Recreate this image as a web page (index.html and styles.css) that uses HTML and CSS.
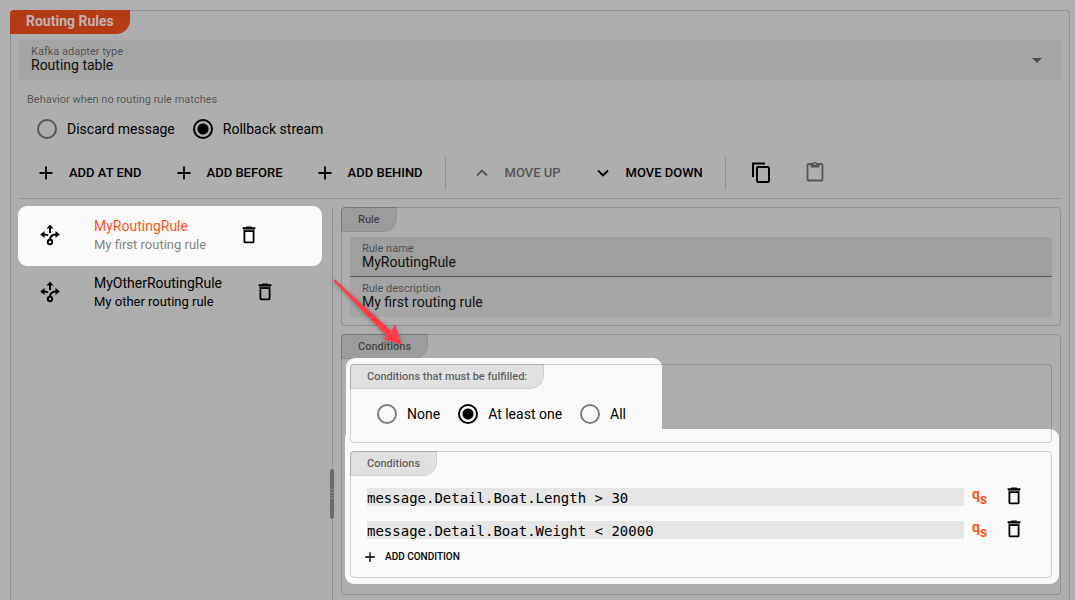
FILE: index.html
```html
<!DOCTYPE html>
<html lang="en">
<head>
<meta charset="utf-8">
<title>Routing Rules</title>
<meta name="viewport" content="width=device-width, initial-scale=1">
<link rel="stylesheet" href="styles.css">
</head>
<body>
<svg class="sprite" aria-hidden="true">
  <symbol id="plus" viewBox="0 0 16 16"><path d="M8 1.5v13M1.5 8h13" fill="none" stroke="currentColor" stroke-width="1.8"/></symbol>
  <symbol id="up" viewBox="0 0 16 16"><path d="M3 10.5 8 5.6l5 4.9" fill="none" stroke="currentColor" stroke-width="1.8"/></symbol>
  <symbol id="down" viewBox="0 0 16 16"><path d="M3 5.5l5 4.9 5-4.9" fill="none" stroke="currentColor" stroke-width="1.8"/></symbol>
  <symbol id="trash" viewBox="0 0 14 18"><path d="M.6 2.1h12.8M4.2 1.2h5.6" fill="none" stroke="currentColor" stroke-width="1.6"/><path d="M1 3.6h12" stroke="currentColor" stroke-width="1.6" opacity=".55"/><path d="M2.4 5.2h9.2v10.2q0 1-1 1H3.400q-1 0-1-1z" fill="none" stroke="currentColor" stroke-width="1.8"/></symbol>
  <symbol id="route" viewBox="0 0 20 22"><g fill="none" stroke="currentColor" stroke-width="2"><circle cx="10" cy="18" r="2.2"/><path d="M10 4v5M10 16c0-3.300 2-5.500 6-5.500M4 10.500c1.800 0 3 .3 4 1"/></g><path d="M10 .5 13.500 4.500h-7zM19.800 10.500l-4.300 3.500V7zM.2 10.500 4.500 7v7z" fill="currentColor"/></symbol>
</svg>
<main class="panel">
  <h1 class="tab tab-main">Routing Rules</h1>

  <div class="field field-select">
    <label for="adapter">Kafka adapter type</label>
    <select id="adapter"><option>Routing table</option></select>
    <svg class="caret" viewBox="0 0 10 5" aria-hidden="true"><path d="M0 0h10L5 5z" fill="currentColor"/></svg>
  </div>

  <p class="hint" id="behavior">Behavior when no routing rule matches</p>
  <div class="radios" role="radiogroup" aria-labelledby="behavior">
    <label><input type="radio" name="behavior">Discard message</label>
    <label><input type="radio" name="behavior" checked>Rollback stream</label>
  </div>

  <div class="toolbar">
    <div class="tools">
      <button type="button"><svg class="icon"><use href="#plus"/></svg>ADD AT END</button>
      <button type="button"><svg class="icon"><use href="#plus"/></svg>ADD BEFORE</button>
      <button type="button"><svg class="icon"><use href="#plus"/></svg>ADD BEHIND</button>
    </div>
    <div class="tools tools-move">
      <button type="button" disabled><svg class="icon"><use href="#up"/></svg>MOVE UP</button>
      <button type="button"><svg class="icon"><use href="#down"/></svg>MOVE DOWN</button>
    </div>
    <div class="tools tools-clip">
      <button type="button" aria-label="Copy"><svg class="clip" viewBox="0 0 20 22"><path d="M2 15V1.500h12" fill="none" stroke="currentColor" stroke-width="2"/><rect x="6" y="5" width="12" height="15" rx="1" fill="none" stroke="currentColor" stroke-width="2"/></svg></button>
      <button type="button" aria-label="Paste" disabled><svg class="clip" viewBox="0 0 20 22"><rect x="2.500" y="2" width="15" height="16.500" rx="1" fill="none" stroke="currentColor" stroke-width="1.800"/><path d="M5.500 1.500h2.300a2.300 2.300 0 0 1 4.400 0h2.300v4h-9z" fill="currentColor"/><circle cx="10" cy="2" r=".9" class="hole"/></svg></button>
    </div>
  </div>

  <div class="split">
    <ul class="rules">
      <li class="rule selected">
        <svg class="route"><use href="#route"/></svg>
        <div><span class="name">MyRoutingRule</span><span class="desc">My first routing rule</span></div>
        <button type="button" aria-label="Delete MyRoutingRule"><svg class="trash"><use href="#trash"/></svg></button>
      </li>
      <li class="rule">
        <svg class="route"><use href="#route"/></svg>
        <div><span class="name">MyOtherRoutingRule</span><span class="desc">My other routing rule</span></div>
        <button type="button" aria-label="Delete MyOtherRoutingRule"><svg class="trash"><use href="#trash"/></svg></button>
      </li>
    </ul>
    <div class="divider"><span class="grip"></span></div>
    <div class="detail">
      <section class="box">
        <h2 class="tab">Rule</h2>
        <div class="field field-active">
          <label for="rname">Rule name</label>
          <input id="rname" type="text" value="MyRoutingRule">
        </div>
        <div class="field">
          <label for="rdesc">Rule description</label>
          <input id="rdesc" type="text" value="My first routing rule">
        </div>
      </section>
      <section class="box">
        <h2 class="tab">Conditions</h2>
        <div class="spotlight">
          <section class="box">
            <h3 class="tab" id="must">Conditions that must be fulfilled:</h3>
            <div class="radios" role="radiogroup" aria-labelledby="must">
              <label><input type="radio" name="must">None</label>
              <label><input type="radio" name="must" checked>At least one</label>
              <label><input type="radio" name="must">All</label>
            </div>
          </section>
          <section class="box box-list">
            <h3 class="tab">Conditions</h3>
            <div class="condition">
              <input type="text" aria-label="Condition 1" value="message.Detail.Boat.Length &gt; 30">
              <button class="qs" type="button"><span>q</span><span class="low">s</span></button>
              <button type="button" aria-label="Delete condition 1"><svg class="trash"><use href="#trash"/></svg></button>
            </div>
            <div class="condition">
              <input type="text" aria-label="Condition 2" value="message.Detail.Boat.Weight &lt; 20000">
              <button class="qs" type="button"><span>q</span><span class="low">s</span></button>
              <button type="button" aria-label="Delete condition 2"><svg class="trash"><use href="#trash"/></svg></button>
            </div>
            <button class="add" type="button"><svg class="icon-small"><use href="#plus"/></svg>ADD CONDITION</button>
          </section>
        </div>
      </section>
      <svg class="arrow" viewBox="0 0 80 76" aria-hidden="true"><path d="M3.500 4 5 2.500 61.500 54 65 47 71.500 67.500 53.500 62 57 59z" fill="#ff3b47"/></svg>
    </div>
  </div>
</main>
</body>
</html>
```
FILE: styles.css
```css
* { box-sizing: border-box; }
:root {
  --line: rgba(0, 0, 0, .17);
  --lit: #fafafa;
  --muted: rgba(0, 0, 0, .54);
}
body {
  margin: 0;
  padding: 10px 5px 0 10px;
  background: #b0b0b0;
  color: #000;
  font: 14px/20px Roboto, sans-serif;
}
h1, h2, h3, p, ul { margin: 0; padding: 0; }
ul { list-style: none; }
button {
  display: inline-flex;
  align-items: center;
  padding: 0;
  border: 0;
  background: none;
  color: inherit;
  font: 500 13px/20px Roboto, sans-serif;
}
button:disabled { color: #555; }
input, select {
  margin: 0;
  padding: 0;
  border: 0;
  border-radius: 0;
  background: none;
  color: inherit;
  font: inherit;
  appearance: none;
}
svg { display: block; flex: none; }
.sprite { position: absolute; width: 0; height: 0; }

.panel {
  display: flex;
  flex-direction: column;
  min-height: calc(100vh - 10px);
  padding: 0 8px;
  border: 1px solid var(--line);
  border-bottom: 0;
  border-radius: 4px 4px 0 0;
  background: #aeaeae;
}
.tab {
  align-self: flex-start;
  width: fit-content;
  height: 25px;
  margin: -1px 0 5px -9px;
  padding: 0 16px;
  border: 1px solid var(--line);
  border-radius: 4px 0 14px 0;
  background: rgba(0, 0, 0, .1);
  background-clip: padding-box;
  color: rgba(0, 0, 0, .6);
  font-size: 11px;
  font-weight: 500;
  line-height: 23px;
}
.tab-main {
  height: 24px;
  margin-bottom: 6px;
  border: 0;
  background: #b43b16;
  color: #bdb3b0;
  font-size: 14px;
  font-weight: 700;
  line-height: 23px;
}

.field {
  position: relative;
  display: flex;
  flex-direction: column;
  height: 40px;
  padding: 6px 12px 0;
  border-radius: 4px 4px 0 0;
  background: rgba(0, 0, 0, .05);
}
.field label { color: var(--muted); font-size: 11px; line-height: 11px; }
.field input, .field select { width: 100%; height: 17px; color: #111; line-height: 17px; }
.field-active { border-bottom: 1px solid #5c5c5c; background: rgba(0, 0, 0, .09); }
.caret { position: absolute; top: 18px; right: 19px; width: 10px; height: 5px; color: #4c4c4c; }

.hint { margin: 12px 8px 0; color: var(--muted); font-size: 11px; line-height: 16px; }
.radios { display: flex; gap: 18px; margin: 11px 0 0 18px; }
.radios label { display: flex; align-items: center; gap: 10px; }
.radios input {
  width: 20px;
  height: 20px;
  border: 2px solid rgba(0, 0, 0, .5);
  border-radius: 50%;
}
.radios input:checked { border-color: #000; background: radial-gradient(#000 5px, transparent 6px); }

.toolbar {
  display: flex;
  margin-top: 18px;
  padding-bottom: 8px;
  border-bottom: 1px solid var(--line);
}
.tools { display: flex; gap: 34px; height: 33px; padding: 0 22px 2px 19px; }
.tools button { gap: 15px; }
.tools-move { padding-left: 28px; border: solid var(--line); border-width: 0 1px; }
.tools-clip { padding-left: 25px; }
.icon { width: 16px; height: 16px; }
.clip { width: 20px; height: 22px; }
.hole { fill: #aeaeae; }

.split { display: flex; flex: 1; padding-top: 8px; }
.rules { flex: 0 0 311px; }
.rule {
  position: relative;
  z-index: 0;
  display: flex;
  align-items: center;
  height: 57px;
  padding: 0 0 2px 21px;
}
.rule div { margin: 0 36px 0 34px; }
.rule span { display: block; }
.desc { font-size: 13px; line-height: 18px; }
.selected .name { color: #ff5424; }
.selected .desc { color: #858585; }
.selected::before {
  content: "";
  position: absolute;
  z-index: -1;
  inset: -1px 8px -2px -1px;
  border-radius: 9px;
  background: var(--lit);
}
.route { width: 20px; height: 22px; }
.trash { width: 14px; height: 18px; }

.divider { position: relative; width: 5px; background: linear-gradient(var(--line), var(--line)) 2px 0 / 1px 100% no-repeat; }
.grip {
  position: absolute;
  top: 262px;
  left: 0;
  width: 4px;
  height: 50px;
  border-radius: 2px;
  background: repeating-linear-gradient(#858585 0 1px, #6c6c6c 1px 3px) 0 20px / 100% 12px no-repeat #6c6c6c;
}
.detail {
  position: relative;
  display: flex;
  flex: 1;
  flex-direction: column;
  gap: 8px;
  min-width: 0;
  margin-left: 6px;
  padding-bottom: 5px;
}
.box { padding: 0 8px 8px; border: 1px solid var(--line); border-radius: 4px; }
.spotlight { position: relative; z-index: 0; display: flex; flex-direction: column; gap: 8px; padding-bottom: 8px; }
.spotlight::before, .spotlight::after {
  content: "";
  position: absolute;
  z-index: -1;
  background: var(--lit);
}
.spotlight::before { top: -6px; left: -4px; width: 316px; height: 80px; border-radius: 9px 9px 0 0; }
.spotlight::after { inset: 65px -7px 2px -5px; border-radius: 9px; }
.spotlight .radios { margin: 15px 0 10px 18px; }
.spotlight .box-list { padding: 0 30px 10px 16px; }
.box-list .tab { margin: -1px 0 12px -17px; }
.condition { display: flex; align-items: center; margin-bottom: 15px; }
.condition input {
  flex: 1;
  min-width: 0;
  height: 18px;
  padding-top: 2px;
  background: #e6e6e6;
  font: 14px/16px "DejaVu Sans Mono", monospace;
}
.condition button { height: 18px; padding-bottom: 2px; }
.condition .qs { align-items: flex-start; width: 15px; margin: 0 20px 0 8px; padding: 0; color: #ff5424; font-weight: 700; font-size: 14px; line-height: 12px; }
.low { padding-top: 5px; }
.add { display: flex; gap: 9px; margin: -7px 0 0 -3px; font-size: 10px; }
.icon-small { width: 12px; height: 12px; }
.arrow { position: absolute; top: 70px; left: -11px; width: 80px; height: 76px; filter: drop-shadow(0 1px 2px rgba(0, 0, 0, .3)); }
```
